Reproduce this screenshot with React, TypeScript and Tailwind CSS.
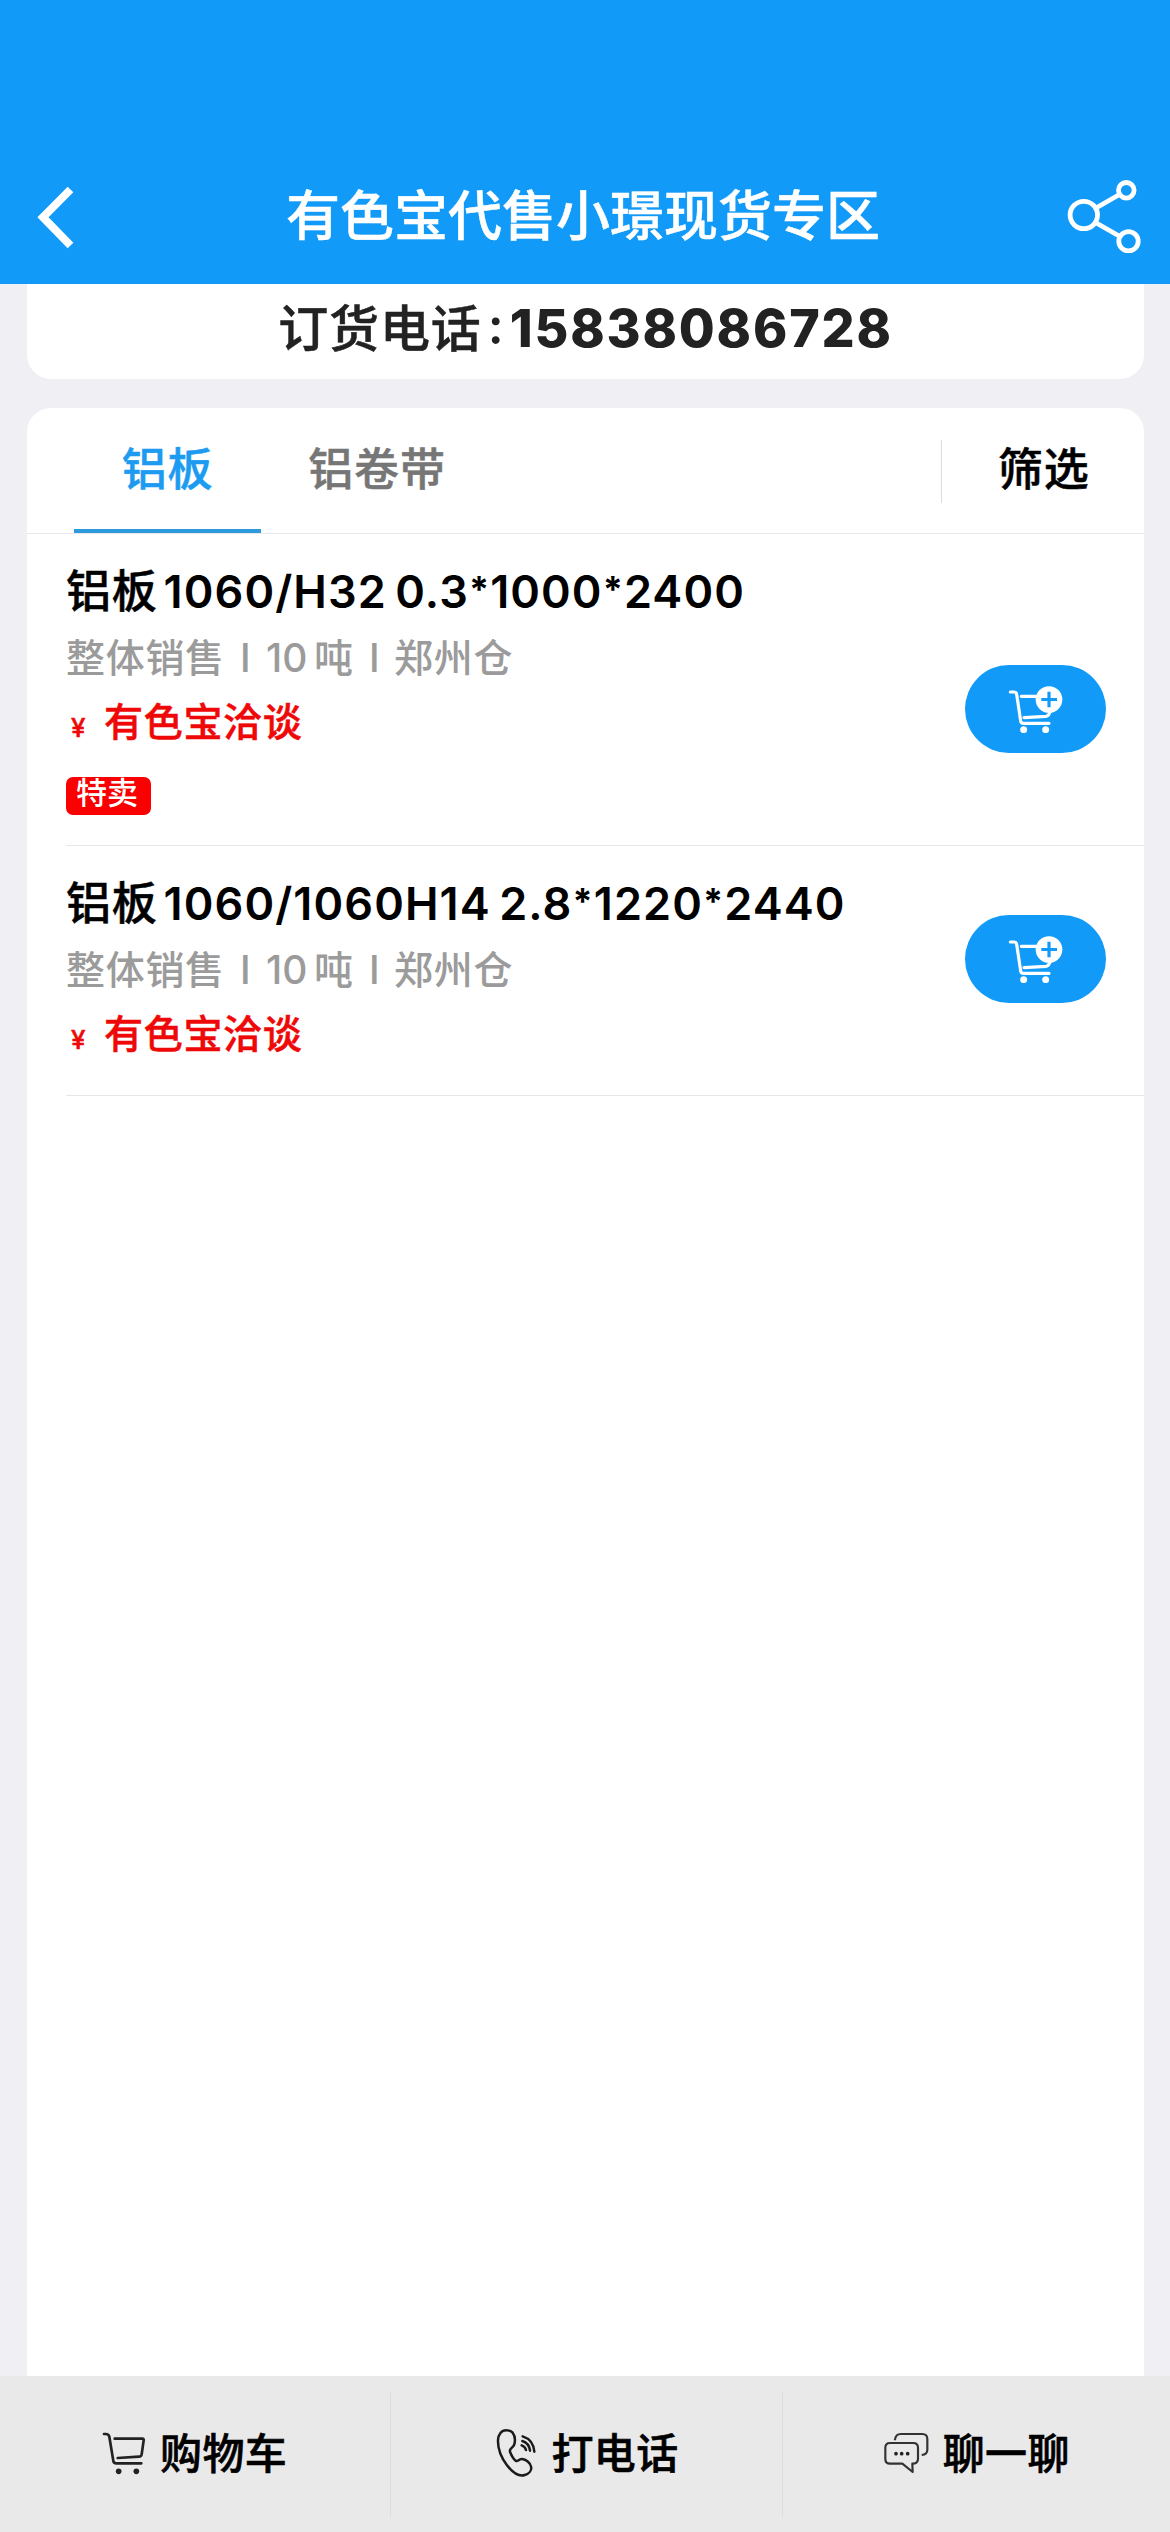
import { Fragment, type ReactNode } from 'react';

const products = [
  { name: '铝板', spec: '1060/H32 0.3*1000*2400', special: true },
  { name: '铝板', spec: '1060/1060H14 2.8*1220*2440', special: false },
];

function BackIcon() {
  return (
    <svg className="h-[64px] w-[40px]" viewBox="0 0 40 64" fill="none" stroke="#fff" strokeWidth="8">
      <path d="M35.5 4.5 8 32.2 35.5 60.5" />
    </svg>
  );
}

function ShareIcon() {
  return (
    <svg className="mb-[2px] h-[76px] w-[76px]" viewBox="0 0 76 76" fill="none" stroke="#fff" strokeWidth="4.8">
      <circle cx="18.8" cy="38" r="13.700" />
      <circle cx="61.3" cy="13.3" r="7.800" />
      <circle cx="63.5" cy="64.3" r="9.700" />
      <path d="M31 31 54.5 17.5M30.5 45.5 55 59.5" />
    </svg>
  );
}

function AddCartIcon() {
  return (
    <svg className="h-[48px] w-[56px]" viewBox="203 130 168 144" fill="none" stroke="#fff" strokeWidth="9.5" strokeLinecap="round" strokeLinejoin="round">
      <path d="M210 151h12q6 0 7 7l12 80q1 7 8 7h77M243 164h48M251 228l66-4q9-1 12-14" />
      <circle cx="250" cy="264" r="10.5" fill="#fff" stroke="none" />
      <circle cx="316" cy="264" r="10.5" fill="#fff" stroke="none" />
      <circle cx="326" cy="173.500" r="40" fill="#fff" stroke="none" />
      <path d="M326 150v47M303 173.500h47" stroke="#119af7" strokeLinecap="butt" />
    </svg>
  );
}

function CartIcon() {
  return (
    <svg className="h-[48px] w-[48px]" viewBox="27 60 144 144" fill="none" stroke="#222" strokeWidth="8" strokeLinecap="round" strokeLinejoin="round">
      <path d="M39 75h6q8 0 10 8l12 73q1 7 9 7h75M71 89h83q5 0 4 5l-6 42q-1 7-8 7l-64 4" />
      <circle cx="83" cy="187" r="8.500" fill="#222" stroke="none" />
      <circle cx="136" cy="187" r="8.500" fill="#222" stroke="none" />
    </svg>
  );
}

function PhoneIcon() {
  return (
    <svg className="h-[48px] w-[48px]" viewBox="27 62 144 144" fill="none" stroke="#1a1a1a" strokeWidth="7.5" strokeLinecap="round" strokeLinejoin="round">
      <path d="M74 66C58 65 49 79 48 95C47 120 57 147 75 171C92 193 112 205 128 200C141 196 150 186 147 175C145 163 132 153 120 152C110 151 108 162 101 157C93 151 88 140 84 130C81 120 95 118 97 108C100 96 99 82 92 73C87 67 80 66 74 66Z" />
      <path d="M122 84q32 10 35 46M121 98q20 6 23 29M119 111q11 4 13 14" />
    </svg>
  );
}

function ChatIcon() {
  return (
    <svg className="h-[48px] w-[48px]" viewBox="32 60 144 144" fill="none" stroke="#333" strokeWidth="6.5" strokeLinejoin="round">
      <path d="M68 94v-3q3-16 17-16h65q15 0 15 15v32q0 14-17 16" />
      <path d="M53 102h70q14 0 14 14v33q0 14-14 15h-3l1 25-31-25H53q-14 0-14-14v-34q0-14 14-14z" />
      <g fill="#222" stroke="none">
        <circle cx="71" cy="134" r="5.500" />
        <circle cx="88" cy="134" r="5.500" />
        <circle cx="106" cy="134" r="5.500" />
      </g>
    </svg>
  );
}

function Spec({ text }: { text: string }) {
  return (
    <span className="tracking-[1.1px] [font-feature-settings:'calt'_0] [word-spacing:-4px]">
      {text.split('*').map((part, i) => (
        <Fragment key={i}>
          {i > 0 && <span className="align-[6px] text-[36px] leading-none font-bold">*</span>}
          {part}
        </Fragment>
      ))}
    </span>
  );
}

function Product({ name, spec, special }: { name: string; spec: string; special: boolean }) {
  return (
    <li className="ml-[39px] flex items-end justify-between border-b border-[#e6e6e6] pr-[38px] last:h-[250px]">
      <div className="self-start pt-[28px]">
        <h2 className="flex h-[60px] gap-[6px] text-[45px] leading-[60px] font-semibold text-black">
          <span className="font-medium tracking-[0.8px] [-webkit-text-stroke:0.5px]">{name}</span>
          <Spec text={spec} />
        </h2>
        <p className="mt-[6px] flex text-[39px] leading-[60px] font-medium text-[#9b9b9b]">
          <span className="w-[174px] tracking-[0.7px]">整体销售</span>
          <span className="w-[26px]">I</span>
          <span className="w-[48px]">10</span>
          <span className="w-[55px]">吨</span>
          <span className="w-[25px]">I</span>
          <span className="tracking-[0.7px]">郑州仓</span>
        </p>
        <p className="mt-[4px] flex text-[39px] leading-[60px] font-medium tracking-[0.7px] text-[#ee0808] [-webkit-text-stroke:0.5px]">
          <span className="w-[38px] pt-[6px] pl-[5px] text-[26px]">¥</span>有色宝洽谈
        </p>
        {special && (
          <div className="mt-[19px] mb-[30px] h-[38px] w-[85px] rounded-[7px] bg-[#fa0000] pl-[10px] text-[31px] leading-[32px] font-medium text-white">
            特卖
          </div>
        )}
      </div>
      <button className="mb-[92px] flex h-[88px] w-[141px] items-center justify-center rounded-full bg-[#119af7]">
        <AddCartIcon />
      </button>
    </li>
  );
}

function Action({ icon, label }: { icon: ReactNode; label: string }) {
  return (
    <button className="flex h-[125px] flex-1 items-center justify-center gap-[12px] border-r border-[#dedede] pr-[3px] pb-[2px] text-[42px] font-medium text-black last:border-r-0 last:pr-0">
      {icon}
      <span className="tracking-[0.4px] [-webkit-text-stroke:0.6px]">{label}</span>
    </button>
  );
}

export default function App() {
  return (
    <div className="flex h-[2532px] w-[1170px] flex-col overflow-hidden bg-[#efeff4] font-['Inter','Noto_Sans_CJK_SC',sans-serif]">
      <header className="flex h-[284px] shrink-0 items-end justify-between bg-[#119af7] pr-[29px] pb-[29px] pl-[35px]">
        <div className="flex h-[76px] w-[66px] items-center"><BackIcon /></div>
        <h1 className="text-[54px] leading-[76px] font-medium text-white [-webkit-text-stroke:0.5px]">有色宝代售小璟现货专区</h1>
        <ShareIcon />
      </header>

      <section className="mx-[27px] flex h-[95px] w-[1117px] shrink-0 items-start justify-center rounded-b-[24px] bg-white pt-[15px] text-[50px] leading-[60px] text-[#222]">
        <span className="font-medium tracking-[0.9px] [-webkit-text-stroke:0.5px]">订货电话</span>
        <span className="-mt-[3px] w-[28px] text-center font-semibold">:</span>
        <span className="text-[52px] font-extrabold tracking-[1.8px]">15838086728</span>
      </section>

      <main className="mx-[27px] mt-[29px] flex w-[1117px] flex-1 flex-col rounded-t-[24px] bg-white">
        <nav className="flex h-[126px] shrink-0 border-b border-[#e8e8e8] pl-[47px] text-[45px] leading-[60px] font-medium tracking-[0.8px] [-webkit-text-stroke:0.5px]">
          <span className="h-[125px] w-[187px] border-b-4 border-[#2d9bdb] pt-[32px] text-center text-[#1c9bf1]">铝板</span>
          <span className="h-[125px] w-[232px] pt-[32px] text-center text-[#767676]">铝卷带</span>
          <span className="mt-[32px] ml-auto h-[63px] w-[203px] border-l border-[#ddd] pl-[56px] text-black">筛选</span>
        </nav>
        <ul>
          {products.map((p) => <Product key={p.spec} {...p} />)}
        </ul>
      </main>

      <footer className="flex h-[156px] shrink-0 items-center bg-[#e9e9e9]">
        <Action icon={<CartIcon />} label="购物车" />
        <Action icon={<PhoneIcon />} label="打电话" />
        <Action icon={<ChatIcon />} label="聊一聊" />
      </footer>
    </div>
  );
}
